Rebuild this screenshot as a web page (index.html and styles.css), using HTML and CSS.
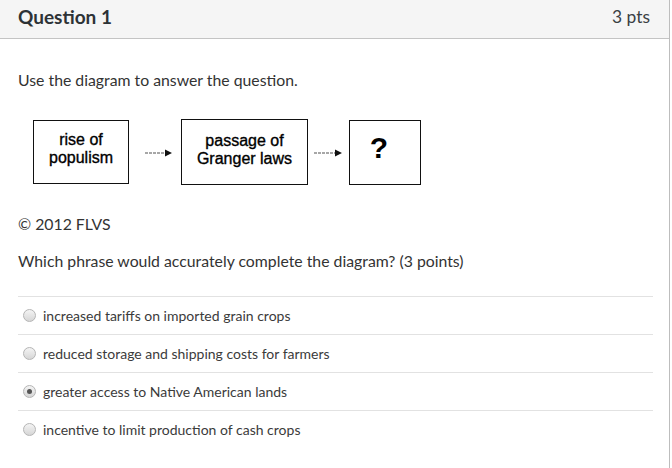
FILE: index.html
```html
<!DOCTYPE html>
<html>
<head>
<meta charset="utf-8">
<link rel="stylesheet" href="styles.css">
</head>
<body>
<div class="question">
  <div class="q-header">
    <span class="q-title">Question 1</span>
    <span class="q-pts">3 pts</span>
  </div>
  <div class="q-body">
    <p class="q-text first">Use the diagram to answer the question.</p>
    <div class="diagram">
      <div class="box box1">rise of<br>populism</div>
      <svg class="arrow arrow1" width="28" height="10" viewBox="0 0 28 10">
        <line x1="0" y1="5" x2="21" y2="5" stroke="#8a8a8a" stroke-width="1.6" stroke-dasharray="3 1"/>
        <polygon points="20,1.5 27,5 20,8.5" fill="#111"/>
      </svg>
      <div class="box box2">passage of<br>Granger laws</div>
      <svg class="arrow arrow2" width="29" height="10" viewBox="0 0 29 10">
        <line x1="0" y1="5" x2="22" y2="5" stroke="#8a8a8a" stroke-width="1.6" stroke-dasharray="3 1"/>
        <polygon points="21,1.5 28,5 21,8.5" fill="#111"/>
      </svg>
      <div class="box box3 qmark">?</div>
    </div>
    <p class="q-text copy">© 2012 FLVS</p>
    <p class="q-text ask">Which phrase would accurately complete the diagram? (3 points)</p>
    <ul class="answers">
      <li class="answer"><span class="radio"></span>increased tariffs on imported grain crops</li>
      <li class="answer"><span class="radio"></span>reduced storage and shipping costs for farmers</li>
      <li class="answer"><span class="radio checked"></span>greater access to Native American lands</li>
      <li class="answer"><span class="radio"></span>incentive to limit production of cash crops</li>
    </ul>
  </div>
</div>
</body>
</html>
```

FILE: styles.css
```css
html, body {
  margin: 0;
  padding: 0;
  background: #fff;
}
body {
  font-family: Lato, "Liberation Sans", sans-serif;
  color: #333;
}
.question {
  width: 669px;
  height: 468px;
  border-right: 1px solid #bdbdbd;
  box-sizing: content-box;
}
.q-header {
  background: #f5f5f5;
  border-bottom: 1px solid #c4c4c4;
  display: flex;
  align-items: center;
  justify-content: space-between;
  padding: 0 19px 0 18px;
  box-sizing: border-box;
  height: 39px;
}
.q-title {
  font-weight: bold;
  font-size: 19px;
  color: #2d3236;
  margin-top: -6px;
}
.q-pts {
  font-size: 17.4px;
  color: #3a3f44;
  margin-top: -6px;
}
.q-body {
  padding: 0 18px 0 18px;
}
.q-text {
  margin: 0;
  font-size: 15.8px;
  line-height: 20px;
}
.first {
  padding-top: 31px;
}
.diagram {
  display: flex;
  align-items: center;
  margin-top: 29px;
  margin-left: 15px;
  height: 66px;
  font-family: "Liberation Sans", Arial, sans-serif;
  color: #000;
}
.box {
  border: 1px solid #111;
  box-sizing: border-box;
  display: flex;
  align-items: center;
  justify-content: center;
  text-align: center;
  font-size: 16px;
  line-height: 18px;
  -webkit-text-stroke: 0.35px #000;
}
.box1 {
  width: 96px;
  height: 64px;
  padding-bottom: 6px;
}
.box2 {
  width: 127px;
  height: 66px;
  padding-bottom: 4px;
}
.box3 {
  width: 72px;
  height: 65px;
}
.qmark {
  font-size: 30px;
  font-weight: bold;
  padding-bottom: 8px;
  padding-right: 12px;
  -webkit-text-stroke: 0;
}
.arrow {
  display: block;
  margin-top: 2px;
}
.arrow1 {
  margin-left: 16px;
  margin-right: 8px;
}
.arrow2 {
  margin-left: 6px;
  margin-right: 6px;
}
.copy {
  margin-top: 29px;
}
.ask {
  margin-top: 17px;
}
.answers {
  list-style: none;
  margin: 25px 0 0 0;
  padding: 0;
  width: 635px;
}
.answer {
  border-top: 1px solid #e2e2e2;
  height: 37px;
  display: flex;
  align-items: center;
  font-size: 14px;
  color: #3b3b3b;
  padding-left: 5px;
  padding-bottom: 1px;
  box-sizing: border-box;
  height: 38px;
}
.radio {
  width: 11px;
  height: 11px;
  border-radius: 50%;
  border: 1px solid #b5b5b5;
  background: linear-gradient(#f4f4f4, #d6d6d6);
  margin-right: 7px;
  display: flex;
  align-items: center;
  justify-content: center;
  flex-shrink: 0;
}
.radio.checked::after {
  content: "";
  width: 5px;
  height: 5px;
  border-radius: 50%;
  background: #555;
}
```
